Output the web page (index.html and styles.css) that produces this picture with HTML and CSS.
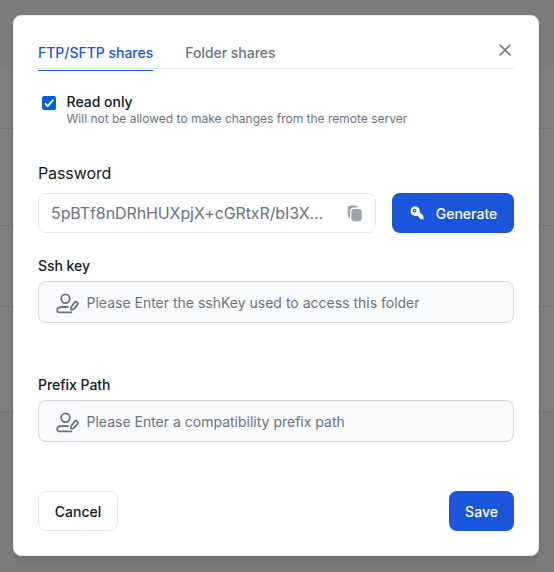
FILE: index.html
```html
<!DOCTYPE html>
<html lang="en">
<head>
<meta charset="utf-8">
<title>Shares</title>
<link rel="stylesheet" href="styles.css">
</head>
<body>
<svg class="defs" aria-hidden="true">
  <symbol id="user-edit" viewBox="0 0 24 24">
    <g fill="none" stroke="currentColor" stroke-width="1.8" stroke-linecap="round" stroke-linejoin="round">
      <circle cx="10.5" cy="7.7" r="4.3"/>
      <path d="M13 16H7.5C4.3 16 2.2 17.3 2.2 19.3c0 1.4.8 2.1 2 2.1h12.2"/>
      <path d="M19.3 11.7c.8-1 1.9-1.1 2.8-.4.9.8.9 1.8.1 2.8l-3 3.5c-.7.8-1.8 1.2-3.3 1-.1-1.4.1-2.4.8-3.2z"/>
    </g>
  </symbol>
</svg>
<div class="modal" role="dialog">
  <header class="header">
    <nav class="tabs">
      <a class="tab active">FTP/SFTP shares</a>
      <a class="tab">Folder shares</a>
    </nav>
    <button class="close" aria-label="Close"><svg width="12" height="12" viewBox="0 0 12 12"><path d="M1 1l10 10M11 1L1 11" fill="none" stroke="currentColor" stroke-width="1.6" stroke-linecap="round"/></svg></button>
  </header>
  <div class="readonly">
    <span class="checkbox"><svg width="14" height="14" viewBox="0 0 14 14"><path d="M3 7.4l2.7 2.7L11.2 3.8" fill="none" stroke="#fff" stroke-width="1.9"/></svg></span>
    <div>
      <div class="option">Read only</div>
      <div class="hint">Will not be allowed to make changes from the remote server</div>
    </div>
  </div>
  <div class="password-label">Password</div>
  <div class="password-row">
    <div class="password">
      <span>5pBTf8nDRhHUXpjX+cGRtxR/bI3X...</span>
      <svg width="16" height="17" viewBox="0 0 16 17"><path d="M3.1 13A3 3 0 0 1 .8 10V3.5a3 3 0 0 1 3-3h4.4a3 3 0 0 1 2.8 2H7.1a4 4 0 0 0-4 4z" fill="currentColor"/><rect x="4.3" y="4" width="10.4" height="12.2" rx="3" fill="currentColor"/></svg>
    </div>
    <button class="btn primary generate">
      <svg width="16" height="16" viewBox="0 0 16 16"><path fill="currentColor" fill-rule="evenodd" d="M6 1.2a4.9 4.9 0 0 1 4.7 6.1l3.8 3.8v3.2h-3.1l-.2-1.2-1.2-.2-.3-1.4-1.6-.8A4.9 4.9 0 1 1 6 1.2zM5.6 3.7a1.9 1.9 0 1 0 0 3.8 1.9 1.9 0 0 0 0-3.8z"/><circle cx="5.6" cy="5.6" r=".8" fill="currentColor"/></svg>
      <span>Generate</span>
    </button>
  </div>
  <div class="label ssh">Ssh key</div>
  <div class="field"><svg class="user"><use href="#user-edit"/></svg><span>Please Enter the sshKey used to access this folder</span></div>
  <div class="label prefix">Prefix Path</div>
  <div class="field"><svg class="user"><use href="#user-edit"/></svg><span>Please Enter a compatibility prefix path</span></div>
  <footer class="actions">
    <button class="btn secondary"><span>Cancel</span></button>
    <button class="btn primary save"><span>Save</span></button>
  </footer>
</div>
</body>
</html>
```
FILE: styles.css
```css
* { box-sizing: border-box; }
body {
  margin: 0;
  height: 572px;
  padding: 15px 15px 16px 13px;
  overflow: hidden;
  font-family: Inter, "Liberation Sans", sans-serif;
  font-size: 14px;
  line-height: 20px;
  color: #111928;
  background: linear-gradient(#7b7d7c 0 67px, #807f7f 67px 128px, #737373 128px 129px, #807f7f 129px 225px, #737373 225px 226px, #807f7f 226px 306px, #737373 306px 307px, #807f7f 307px 411px, #737373 411px 412px, #7b7d7c 412px);
}
.defs { position: absolute; width: 0; height: 0; }
.modal {
  height: 541px;
  padding: 24px;
  display: flex;
  flex-direction: column;
  background: #fff;
  border: 1px solid #e5e7eb;
  border-radius: 8px;
  box-shadow: 0 4px 6px rgba(0, 0, 0, .1);
}
.header {
  display: flex;
  justify-content: space-between;
  height: 29px;
  flex: none;
  border-bottom: 1px solid #e5e7eb;
}
.tabs { display: flex; gap: 32px; letter-spacing: -.02px; }
.tab { height: 31px; padding-top: 3px; font-weight: 500; color: #6b7280; }
.tab.active { color: #1a56db; border-bottom: 1px solid #1a56db; }
button { font: inherit; cursor: pointer; }
.close {
  width: 18px;
  height: 20px;
  padding: 0;
  border: 0;
  background: none;
  color: #6b7280;
  display: grid;
  place-items: center;
}
.readonly { display: flex; gap: 10.5px; margin: 23px 0 0 4px; }
.checkbox { width: 14px; height: 14px; margin-top: 4px; border-radius: 2px; background: #0060df; display: flex; }
.option { font-weight: 500; }
.hint { font-size: 12px; line-height: 16px; margin-top: -1px; color: #6b7280; }
.password-label { margin-top: 34px; font-size: 16px; line-height: 24px; letter-spacing: -.1px; }
.password-row { display: flex; gap: 16px; margin-top: 8px; }
.password {
  flex: 1;
  height: 40px;
  display: flex;
  align-items: center;
  justify-content: space-between;
  padding: 0 12px;
  border: 1px solid #e5e7eb;
  border-radius: 8px;
  font-size: 16px;
  letter-spacing: -.1px;
  color: #6b7280;
}
.password svg { color: #9ca3af; }
.btn {
  height: 40px;
  display: flex;
  align-items: center;
  justify-content: center;
  border: 1px solid transparent;
  border-radius: 8px;
  font-weight: 500;
}
.btn span { padding-top: 2px; }
.primary { color: #fff; background: #1a56db; }
.generate { width: 122px; gap: 11px; }
.secondary { width: 80px; color: #111928; background: #fff; border-color: #e5e7eb; }
.save { width: 65px; }
.label { font-weight: 500; line-height: 20px; margin-bottom: 5px; letter-spacing: -.03px; }
.ssh { margin-top: 23px; }
.prefix { margin-top: 52px; }
.field {
  height: 42px;
  display: flex;
  align-items: center;
  gap: 7.5px;
  padding: 2px 16px 0;
  border: 1px solid #d1d5db;
  border-radius: 8px;
  background: #f9fafb;
  color: #6b7280;
}
.user { width: 24px; height: 24px; }
.actions { display: flex; justify-content: space-between; margin-top: 49px; }
```
